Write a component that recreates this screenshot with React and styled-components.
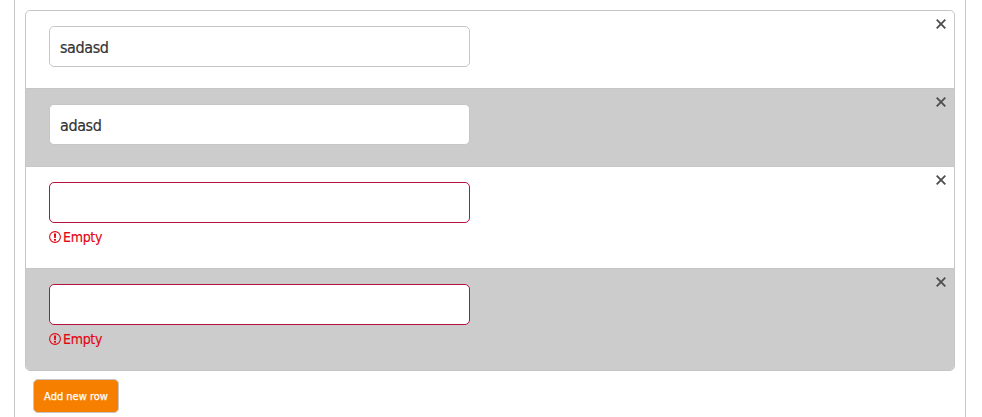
import React from "react";
import styled, { createGlobalStyle } from "styled-components";

const rows = [
  { id: 1, value: "sadasd" },
  { id: 2, value: "adasd" },
  { id: 3, value: "", error: "Empty" },
  { id: 4, value: "", error: "Empty" },
];

const Row = (props) => {
  return (
    <RowWrapper>
      <Field>
        <Input
          type="text"
          defaultValue={props.row.value}
          $invalid={!!props.row.error}
        />
        {props.row.error && (
          <ErrorMessage>
            <ErrorIcon />
            <span>{props.row.error}</span>
          </ErrorMessage>
        )}
      </Field>
      <RemoveButton type="button" aria-label="Remove">
        <svg width="12" height="12" viewBox="0 0 12 12">
          <path d="M1.7 1.7 L10.3 10.3 M10.3 1.7 L1.7 10.3" />
        </svg>
      </RemoveButton>
    </RowWrapper>
  );
};

const ErrorIcon = () => (
  <svg width="12" height="12" viewBox="0 0 12 12" fill="none">
    <circle cx="6" cy="6" r="5.4" stroke="#e30613" strokeWidth="1.1" />
    <path d="M4.9 2.5h2.2l-.3 4.6H5.2z" fill="#e30613" />
    <rect x="5" y="7.9" width="2" height="1.8" fill="#e30613" />
  </svg>
);

const App = () => {
  return (
    <>
      <GlobalStyle />
      <Panel>
        <Rows>
          {rows.map((row) => (
            <Row key={row.id} row={row} />
          ))}
        </Rows>
        <AddButton type="button">Add new row</AddButton>
      </Panel>
    </>
  );
};

const GlobalStyle = createGlobalStyle`
  * {
    box-sizing: border-box;
  }

  body {
    margin: 0;
    background: #fff;
    color: #333;
    font-family: Tahoma, "DejaVu Sans Condensed", "DejaVu Sans", sans-serif;
    overflow: hidden;
  }
`;

const Panel = styled.div`
  width: 952px;
  height: 417px;
  margin-left: 14px;
  padding: 10px;
  border: solid #c6c6c6;
  border-width: 0 1px;
`;

const Rows = styled.div`
  border: 1px solid #c6c6c6;
  border-radius: 5px;
  overflow: hidden;
`;

const RowWrapper = styled.div`
  display: flex;
  justify-content: space-between;
  align-items: flex-start;
  padding: 15px 7px 21px 23px;
  border-bottom: 1px solid #c6c6c6;

  &:nth-child(even) {
    background: #ccc;
  }

  &:last-child {
    border-bottom: none;
  }
`;

const Field = styled.div`
  width: 421px;
`;

const Input = styled.input`
  display: block;
  width: 100%;
  height: 41px;
  padding: 2px 10px 0;
  border: 1px solid ${(props) => (props.$invalid ? "#b5123e" : "#c6c6c6")};
  border-radius: 5px;
  background: #fff;
  color: #333;
  font-family: inherit;
  font-size: 16px;
  letter-spacing: -0.4px;
  -webkit-text-stroke: 0.2px #333;
  outline: none;
`;

const ErrorMessage = styled.div`
  display: flex;
  align-items: center;
  gap: 2px;
  height: 18px;
  margin-top: 6px;
  color: #e30613;
  font-size: 14px;
  letter-spacing: -0.3px;
  line-height: 18px;
  -webkit-text-stroke: 0.15px #e30613;

  svg {
    position: relative;
    top: -1px;
  }

  span {
    margin-top: -2px;
  }
`;

const RemoveButton = styled.button`
  display: flex;
  margin-top: -8px;
  padding: 0;
  border: none;
  background: none;
  cursor: pointer;

  svg {
    fill: none;
    stroke: #505050;
    stroke-width: 1.9;
  }
`;

const AddButton = styled.button`
  display: block;
  width: 86px;
  height: 34px;
  margin: 8px 0 0 8px;
  padding: 0;
  border: 1px solid #c6c6c6;
  border-radius: 5px;
  background: #f77f00;
  color: #fff;
  font-family: inherit;
  font-size: 11px;
  -webkit-text-stroke: 0.25px #fff;
  white-space: nowrap;
  cursor: pointer;
`;

export default App;
